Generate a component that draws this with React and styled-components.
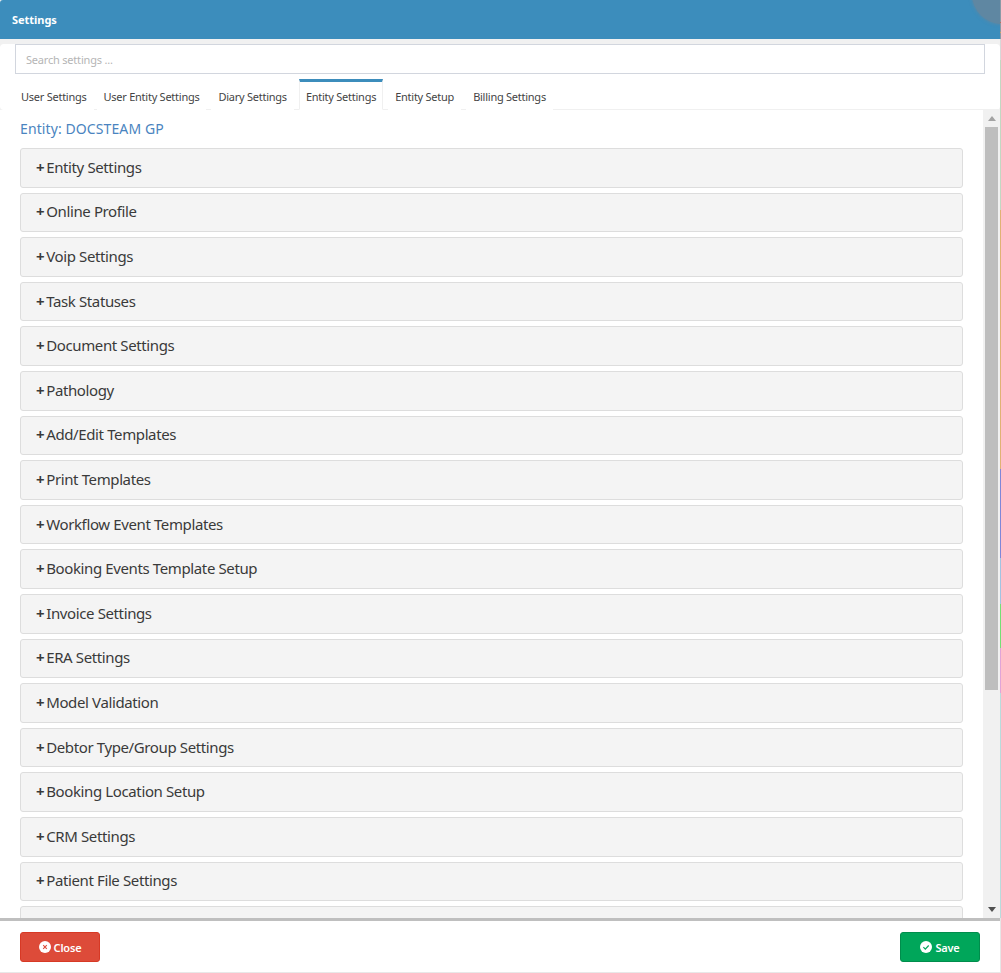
import React from "react";
import styled, { createGlobalStyle } from "styled-components";

const Global = createGlobalStyle`
  html, body { margin: 0; padding: 0; height: 973px; overflow: hidden; background: #f1f1f1; }
  * { box-sizing: border-box; }
`;

const FONT = `"Noto Sans", "Open Sans", sans-serif`;

const Modal = styled.div`
  position: relative;
  width: 1000px;
  height: 973px;
  display: flex;
  flex-direction: column;
  font-family: ${FONT};
  overflow: hidden;
`;
const EdgeStrip = styled.div`
  position: absolute;
  top: 0;
  left: 1000px;
  width: 1px;
  height: 973px;
  background: linear-gradient(
    to bottom,
    #8a9aa6 0 22px, #b5705f 22px 23px, #8a9aa6 23px 32px, #d0a860 32px 33px, #8a9aa6 33px 39px,
    #d8d8d8 39px 60px, #c2d8c2 60px 210px,
    #e0b274 210px 469px, #7f86d8 469px 558px, #a2c4e2 558px 604px,
    #74e074 604px 648px, #e0a4d8 648px 693px, #b8dcdc 693px 918px, #e6e6e6 918px
  );
`;
const Header = styled.header`
  flex: 0 0 39px;
  background: #3c8dbc;
  color: #fff;
  font-size: 11px;
  font-weight: 700;
  letter-spacing: -0.03px;
  padding: 0 12px;
  display: flex;
  align-items: center;
  border-radius: 3px 0 0 0;
`;
const Avatar = styled.div`
  position: absolute;
  top: -36px;
  right: -32px;
  width: 60px;
  height: 60px;
  border-radius: 50%;
  background: #5f87a2;
  box-shadow: 0 0 3px 1px rgba(95, 135, 162, 0.7);
`;
const TopPanel = styled.div`
  margin-top: 5px;
  flex: 0 0 66px;
  background: #fff;
  border-radius: 4px;
  display: flex;
  flex-direction: column;
`;
const SearchRow = styled.div`
  padding: 0 15px;
`;
const Search = styled.input`
  display: block;
  width: 100%;
  height: 30px;
  border: 1px solid #d2d6de;
  background: #fff;
  padding: 0 10px;
  font: 11px ${FONT};
  letter-spacing: -0.2px;
  outline: none;
  &::placeholder { color: #b5b5b5; opacity: 1; }
`;
const Tabs = styled.nav`
  margin: 5px 0 0 15px;
  height: 31px;
  display: flex;
  border-bottom: 1px solid #f0f0f0;
`;
const Tab = styled.div`
  height: 31px;
  padding: 2px 6px 0;
  margin-right: 5px;
  font-size: 11px;
  letter-spacing: -0.25px;
  color: #444;
  display: flex;
  align-items: center;
  background: #fff;
  border-top: 3px solid ${(p) => (p.$active ? "#3c8dbc" : "transparent")};
  border-left: 1px solid ${(p) => (p.$active ? "#f0f0f0" : "transparent")};
  border-right: 1px solid ${(p) => (p.$active ? "#f0f0f0" : "transparent")};
  border-bottom: 1px solid ${(p) => (p.$active ? "#fff" : "transparent")};
  &:first-child {
    margin-left: -1px;
    margin-right: 3px;
  }
`;
const Body = styled.main`
  flex: 1 1 auto;
  min-height: 0;
  display: flex;
  background: #fff;
`;
const Scroller = styled.div`
  flex: 1 1 auto;
  min-width: 0;
  overflow: hidden;
  padding: 9px 20px 0 20px;
`;
const EntityTitle = styled.h4`
  margin: 0 0 9px;
  font-size: 14px;
  line-height: 20px;
  font-weight: 400;
  letter-spacing: 0.1px;
  color: #4a84c0;
`;
const Panel = styled.div`
  height: 39.6px;
  margin-bottom: 5px;
  padding: 0 15px 2px;
  display: flex;
  align-items: center;
  background: #f4f4f4;
  border: 1px solid #dddddd;
  border-radius: 3px;
  font-size: 15px;
  letter-spacing: -0.38px;
  color: #3a3a3a;
`;
const Plus = styled.span`
  font-weight: 700;
  margin-right: 2px;
`;
const Scrollbar = styled.div`
  flex: 0 0 17px;
  background: #f1f1f1;
  display: flex;
  flex-direction: column;
  align-items: center;
`;
const ScrollArrow = styled.div`
  flex: 0 0 17px;
  display: flex;
  align-items: center;
  justify-content: center;
`;
const Thumb = styled.div`
  flex: 0 0 563px;
  width: 13px;
  background: #bebebe;
`;
const Spacer = styled.div`
  flex: 1;
`;
const Footer = styled.footer`
  flex: 0 0 55px;
  background: #fff;
  border-top: 3px solid #bfbfbf;
  border-bottom: 1px solid #e8e8e8;
  padding: 11px 20px 10px 20px;
  display: flex;
  justify-content: space-between;
  align-items: flex-start;
`;
const Button = styled.button`
  width: 80px;
  height: 30px;
  border-radius: 3px;
  border: 1px solid ${(p) => (p.$tone === "save" ? "#008d4c" : "#d73925")};
  background: ${(p) => (p.$tone === "save" ? "#00a65a" : "#dd4b39")};
  color: #fff;
  font: 600 11px ${FONT};
  letter-spacing: -0.2px;
  display: flex;
  align-items: center;
  justify-content: center;
  gap: 3px;
  padding: 0;
`;

const CloseIcon = () => (
  <svg width="12" height="12" viewBox="0 0 12 12">
    <circle cx="6" cy="6" r="6" fill="#fff" />
    <path d="M4.2 4.2l3.6 3.6M7.8 4.2l-3.6 3.6" stroke="#dd4b39" strokeWidth="1.1" />
  </svg>
);
const SaveIcon = () => (
  <svg width="12" height="12" viewBox="0 0 12 12">
    <circle cx="6" cy="6" r="6" fill="#fff" />
    <path d="M3.4 6.2l1.9 1.9 3.4-3.6" fill="none" stroke="#00a65a" strokeWidth="1.2" />
  </svg>
);

const tabs = ["User Settings", "User Entity Settings", "Diary Settings", "Entity Settings", "Entity Setup", "Billing Settings"];
const rows = [
  "Entity Settings", "Online Profile", "Voip Settings", "Task Statuses", "Document Settings", "Pathology",
  "Add/Edit Templates", "Print Templates", "Workflow Event Templates", "Booking Events Template Setup",
  "Invoice Settings", "ERA Settings", "Model Validation", "Debtor Type/Group Settings", "Booking Location Setup",
  "CRM Settings", "Patient File Settings", "",
];

export default function App() {
  return (
    <>
      <Global />
      <EdgeStrip />
      <Modal>
        <Header>Settings</Header>
        <Avatar />
        <TopPanel>
          <SearchRow>
            <Search placeholder="Search settings ..." readOnly />
          </SearchRow>
          <Tabs>
            {tabs.map((t) => (
              <Tab key={t} $active={t === "Entity Settings"}>{t}</Tab>
            ))}
          </Tabs>
        </TopPanel>
        <Body>
          <Scroller>
            <EntityTitle>Entity: DOCSTEAM GP</EntityTitle>
            {rows.map((r, i) => (
              <Panel key={i}>
                {r && <Plus>+</Plus>}
                {r}
              </Panel>
            ))}
          </Scroller>
          <Scrollbar>
            <ScrollArrow>
              <svg width="8" height="5" viewBox="0 0 8 5"><path d="M4 0l4 5H0z" fill="#a3a3a3" /></svg>
            </ScrollArrow>
            <Thumb />
            <Spacer />
            <ScrollArrow>
              <svg width="8" height="5" viewBox="0 0 8 5"><path d="M0 0h8L4 5z" fill="#505050" /></svg>
            </ScrollArrow>
          </Scrollbar>
        </Body>
        <Footer>
          <Button $tone="close"><CloseIcon />Close</Button>
          <Button $tone="save"><SaveIcon />Save</Button>
        </Footer>
      </Modal>
    </>
  );
}
